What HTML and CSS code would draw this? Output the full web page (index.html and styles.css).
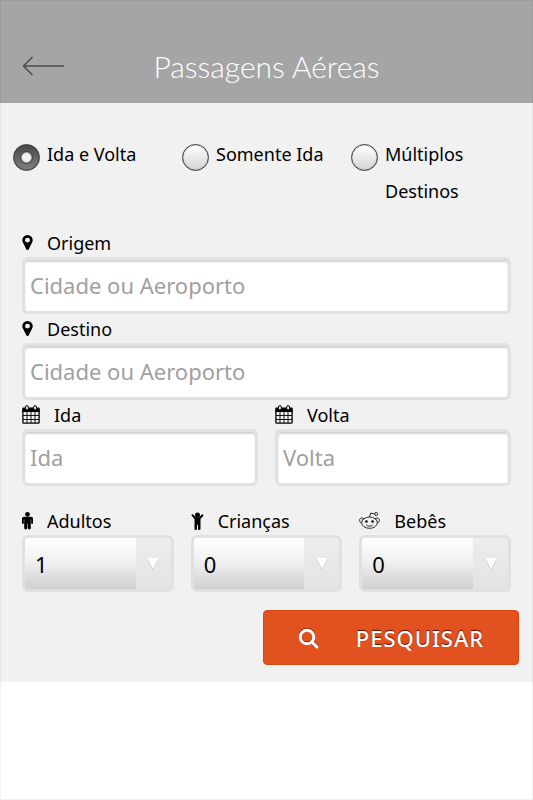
FILE: index.html
```html
<!DOCTYPE html>
<html lang="pt-BR">
<head>
<meta charset="utf-8">
<meta name="viewport" content="width=device-width, initial-scale=1">
<title>Passagens Aéreas</title>
<link rel="stylesheet" href="styles.css">
</head>
<body>
<svg class="sprite" aria-hidden="true">
  <symbol id="pin" viewBox="0 0 12 17"><path fill-rule="evenodd" d="M6 .2A5.700 5.700 0 0 0 .3 5.900c0 1.200.3 1.900.7 2.700l3.800 7.500c.5.900 1.900.9 2.400 0L11 8.600c.4-.8.7-1.500.7-2.700A5.700 5.700 0 0 0 6 .2zM6 3.200a2.700 2.700 0 1 1 0 5.400 2.700 2.700 0 0 1 0-5.400z"/></symbol>
  <symbol id="calendar" viewBox="0 0 18 19">
    <path d="M1.500 2.500h15a1.300 1.300 0 0 1 1.300 1.300V7H.2V3.800a1.300 1.300 0 0 1 1.300-1.300z"/>
    <path fill="none" stroke="#000" stroke-width="1.300" d="M.9 6v11.400q0 .8.800.8h14.600q.8 0 .8-.8V6"/>
    <path fill="none" stroke="#000" stroke-width=".9" d="M5 7v11M9 7v11M13 7v11M1 10.500h16M1 14.500h16"/>
    <rect x="3.500" y=".6" width="2.800" height="4.400" rx="1.400" fill="#f1f1f1" stroke="#000"/>
    <rect x="11.700" y=".6" width="2.800" height="4.400" rx="1.400" fill="#f1f1f1" stroke="#000"/>
  </symbol>
  <symbol id="adult" viewBox="0 0 12 19"><circle cx="6" cy="2.700" r="2.600"/><path d="M2.400 5.400h7.200A2.300 2.300 0 0 1 12 7.700v4.500a1 1 0 0 1-2 0V8.300h-.4v9.200a1.200 1.200 0 0 1-3.300.3v-5h-.6v5a1.200 1.200 0 0 1-3.300-.3V8.300H2v3.900a1 1 0 0 1-2 0V7.700A2.300 2.300 0 0 1 2.400 5.400z"/></symbol>
  <symbol id="child" viewBox="0 0 12 18"><circle cx="6" cy="2.900" r="2.500"/><path d="M.3 2.500a1 1 0 0 1 1.400 0L4.500 5.200h3l2.800-2.700a1 1 0 0 1 1.400 1.400L9 6.900v9.800a1.250 1.250 0 0 1-2.500 0v-4h-1v4a1.250 1.250 0 0 1-2.500 0V6.900L.3 3.900a1 1 0 0 1 0-1.400z"/></symbol>
  <symbol id="baby" viewBox="0 0 22 19">
    <g fill="none" stroke="#222" stroke-width="1"><ellipse cx="11" cy="11.800" rx="8.200" ry="5.900"/><path d="M3.300 9.300l1.700-1.600C2.800 5.500-.7 8 1 10.800q.7.900 1.800 1M18.700 9.300L17 7.700c2.200-2.200 5.700.3 4 3.100q-.7.900-1.800 1M11 5.900l1.200-4.200 4.200.9M7.600 14.200c1.800 1.600 5 1.600 6.800 0"/><circle cx="18" cy="2.700" r="1.600"/></g>
    <circle cx="7.800" cy="10.600" r="1.300"/><circle cx="14.200" cy="10.600" r="1.300"/>
  </symbol>
</svg>

<header class="topbar">
  <a class="back" href="#" aria-label="Voltar">
    <svg viewBox="0 0 42 20" width="42" height="20"><path d="M10.500 1L1.500 10l9 9M1.500 10H42"/></svg>
  </a>
  <h1 class="title">Passagens Aéreas</h1>
</header>

<main>
<form class="search">
  <div class="trip">
    <label class="option"><input type="radio" name="trip" checked><span>Ida e Volta</span></label>
    <label class="option"><input type="radio" name="trip"><span>Somente Ida</span></label>
    <label class="option"><input type="radio" name="trip"><span>Múltiplos Destinos</span></label>
  </div>

  <div class="field">
    <label class="caption" for="origem"><svg class="pin"><use href="#pin"/></svg>Origem</label>
    <input class="box" id="origem" type="text" placeholder="Cidade ou Aeroporto">
  </div>
  <div class="field">
    <label class="caption" for="destino"><svg class="pin"><use href="#pin"/></svg>Destino</label>
    <input class="box" id="destino" type="text" placeholder="Cidade ou Aeroporto">
  </div>
  <div class="row dates">
    <div class="field">
      <label class="caption" for="ida"><svg class="calendar"><use href="#calendar"/></svg>Ida</label>
      <input class="box" id="ida" type="text" placeholder="Ida">
    </div>
    <div class="field">
      <label class="caption" for="volta"><svg class="calendar"><use href="#calendar"/></svg>Volta</label>
      <input class="box" id="volta" type="text" placeholder="Volta">
    </div>
  </div>
  <div class="row people">
    <div class="field">
      <label class="caption" for="adultos"><svg class="adult"><use href="#adult"/></svg>Adultos</label>
      <div class="picker"><select id="adultos"><option>1</option><option>2</option><option>3</option></select><svg class="arrow" viewBox="0 0 14 14"><path class="edge" d="M1 2h12L7 13z"/><path d="M1 1h12L7 12z"/></svg></div>
    </div>
    <div class="field">
      <label class="caption" for="criancas"><svg class="child"><use href="#child"/></svg>Crianças</label>
      <div class="picker"><select id="criancas"><option>0</option><option>1</option><option>2</option></select><svg class="arrow" viewBox="0 0 14 14"><path class="edge" d="M1 2h12L7 13z"/><path d="M1 1h12L7 12z"/></svg></div>
    </div>
    <div class="field">
      <label class="caption" for="bebes"><svg class="baby"><use href="#baby"/></svg>Bebês</label>
      <div class="picker"><select id="bebes"><option>0</option><option>1</option><option>2</option></select><svg class="arrow" viewBox="0 0 14 14"><path class="edge" d="M1 2h12L7 13z"/><path d="M1 1h12L7 12z"/></svg></div>
    </div>
  </div>
  <button class="submit" type="submit">
    <svg viewBox="0 0 22 22" width="22" height="22"><g class="shade"><circle cx="9" cy="9" r="6.800"/><path d="M14 14l5.500 5.500"/></g><circle cx="9" cy="10" r="6.800"/><path d="M14 15l5 5"/></svg>
    PESQUISAR
  </button>
</form>
</main>
</body>
</html>
```
FILE: styles.css
```css
* { box-sizing: border-box; }

body {
  margin: 0;
  min-height: 100vh;
  background: #fff;
  color: #000;
  font: 18px "Noto Sans", "Open Sans", sans-serif;
}

/* hairline frame round the window */
body::after {
  content: "";
  position: fixed;
  inset: 0;
  border: 1px solid rgba(0, 0, 0, .05);
  pointer-events: none;
}

.sprite { position: absolute; width: 0; height: 0; }

.topbar {
  display: grid;
  grid-template-columns: 42px 1fr 42px;
  align-items: center;
  padding: 28px 22px 0;
  height: 103px;
  background: #a5a5a5;
}
.back { display: flex; }
.back svg { fill: none; stroke: #4d4d4d; stroke-width: 1.6; }
.title {
  margin: 0;
  color: #fff;
  font: 300 30px/40px "Gill Sans", Lato, sans-serif;
  text-align: center;
}

.search {
  display: flex;
  flex-direction: column;
  padding: 33px 22px 17px;
  background: #f1f1f1;
}

.trip {
  display: grid;
  grid-template-columns: repeat(3, 1fr);
  margin: 0 -9px 18px;
  line-height: 37px;
}
.option {
  display: flex;
  align-items: flex-start;
  gap: 7px;
}
.option input {
  appearance: none;
  flex: none;
  width: 27px;
  height: 27px;
  margin: 8px 0 0;
  border: 1px solid #3c3c3c;
  border-radius: 50%;
  background: linear-gradient(#fff, #d4d4d4);
  box-shadow: inset 0 0 1px #3c3c3c;
}
.option input:checked {
  background:
    radial-gradient(circle, #f1f1f1 4px, #444 6px, transparent 7px),
    linear-gradient(#484848, #808080);
}

.row { display: grid; gap: 17px; }
.dates { grid-template-columns: repeat(2, 1fr); margin-bottom: 20px; }
.people { grid-template-columns: repeat(3, 1fr); margin-bottom: 18px; }

.field { min-width: 0; }
.caption {
  display: flex;
  align-items: center;
  gap: 14px;
  height: 29px;
}
.pin { width: 11px; height: 17px; }
.calendar { width: 18px; height: 19px; }
.adult { width: 11px; height: 19px; }
.child { width: 13px; height: 18px; }
.baby { width: 21px; height: 19px; }

.box, .picker {
  width: 100%;
  height: 57px;
  border: 3px solid #e1e1e1;
  border-radius: 6px;
}
.box {
  display: block;
  padding: 0 5px 2px;
  background: #fff;
  box-shadow: inset 0 2px 2px #d2d2d2;
  color: #000;
  font: 22px "Noto Sans", "Open Sans", sans-serif;
}
.box::placeholder { color: #a0a0a0; opacity: 1; }

.picker {
  display: grid;
  grid-template-columns: 1fr 35px;
  align-items: center;
  background: linear-gradient(#ededed, #e3e3e3);
}
.picker select {
  appearance: none;
  grid-area: 1 / 1 / 2 / 3;
  width: 100%;
  height: 51px;
  padding: 0 45px 0 10px;
  border: 0;
  border-radius: 3px;
  background: linear-gradient(#fff, #f1f1f1 45%, #cfcfcf) left / calc(100% - 35px) 100% no-repeat;
  color: #000;
  font: 22px "Noto Sans", "Open Sans", sans-serif;
}
.arrow {
  grid-area: 1 / 2;
  justify-self: center;
  width: 14px;
  height: 14px;
  fill: #fff;
  pointer-events: none;
}
.arrow .edge { fill: #bdbdbd; }

.submit {
  display: flex;
  align-items: center;
  justify-content: center;
  gap: 36px;
  align-self: flex-end;
  width: 256px;
  height: 55px;
  margin-right: -8px;
  padding: 0;
  border: 1px solid #dc4710;
  border-radius: 4px;
  background: #e25120;
  color: #fff;
  font: 500 22px "Noto Sans", "Open Sans", sans-serif;
  letter-spacing: 1px;
  text-shadow: 0 -1px 1px #591500;
}
.submit svg { fill: none; stroke: #fff; stroke-width: 3; stroke-linecap: round; }
.submit .shade { stroke: #8a2a08; }
```
